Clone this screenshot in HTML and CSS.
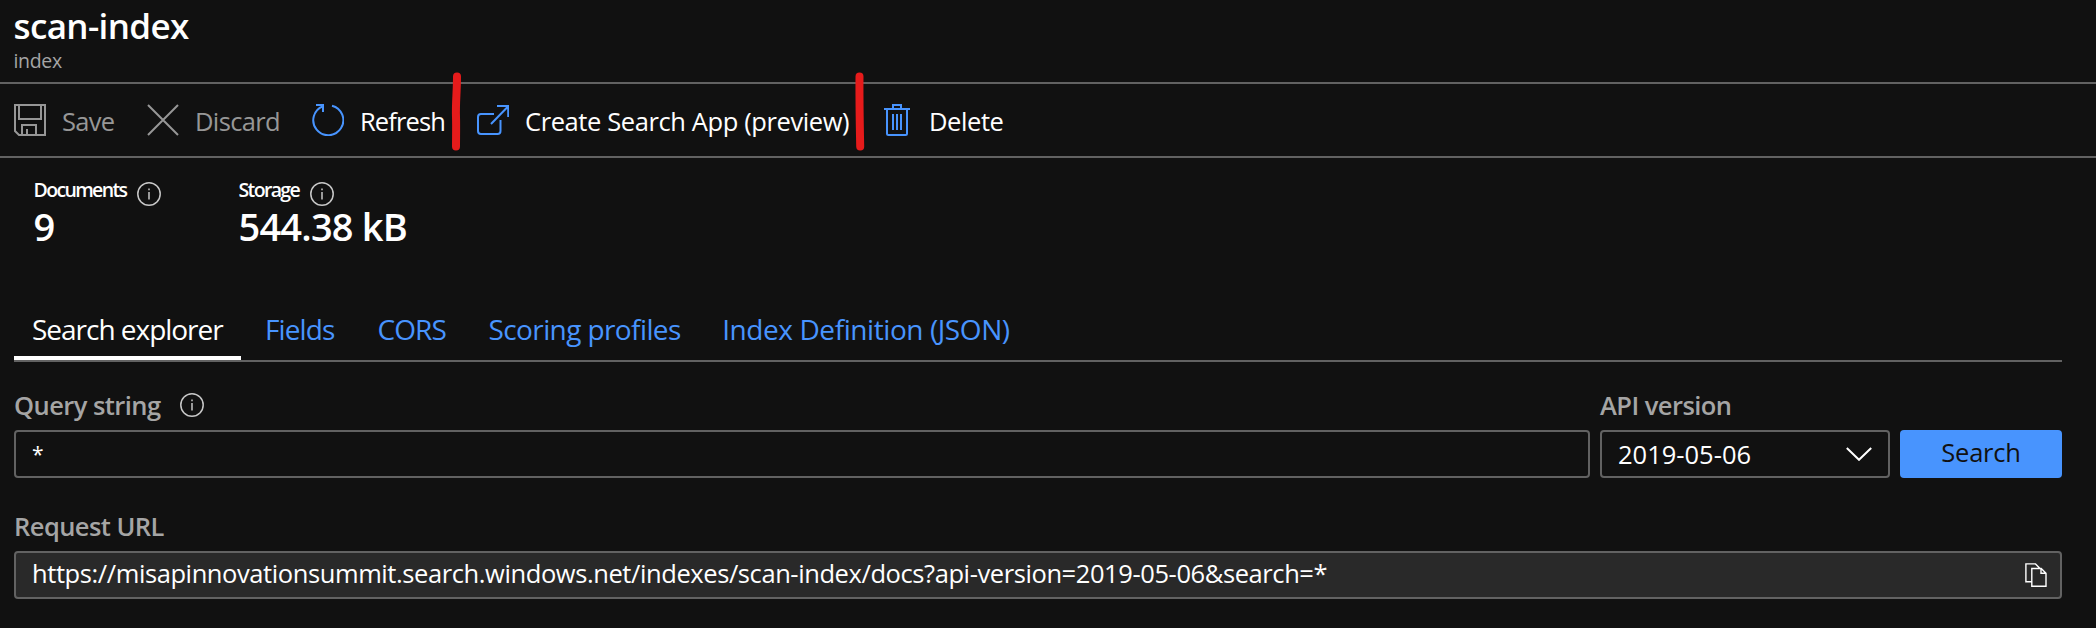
FILE: index.html
```
<!DOCTYPE html>
<html lang="en">
<head>
<meta charset="utf-8">
<title>scan-index</title>
<link rel="stylesheet" href="styles.css">
</head>
<body>
<svg class="defs" width="0" height="0">
  <symbol id="info" viewBox="0 0 24 24">
    <circle cx="12" cy="12" r="11.2" fill="none" stroke="currentColor" stroke-width="1.5"/>
    <path d="M12 10v7.5M12 6.4v1.8" stroke="currentColor" stroke-width="1.5" fill="none"/>
  </symbol>
</svg>
<header class="header">
  <h1 class="title">scan-index</h1>
  <div class="subtitle">index</div>
</header>

<nav class="toolbar">
  <div class="command disabled">
    <svg class="icon" viewBox="0 0 32 32" fill="none" stroke="currentColor" stroke-width="2">
      <path d="M1 1h30v30H5l-4-4zM5 1v14h22V1M8 31V21h14v10M13 31v-6"/>
    </svg>
    <span class="t-save">Save</span>
  </div>
  <div class="command disabled">
    <svg class="icon" viewBox="0 0 32 32" fill="none" stroke="currentColor" stroke-width="2">
      <path d="M1 1l30 30M31 1L1 31"/>
    </svg>
    <span class="t-discard">Discard</span>
  </div>
  <div class="command">
    <svg class="icon blue" viewBox="0 0 32 32" fill="none" stroke="currentColor" stroke-width="2">
      <path d="M20 1.700A15 15 0 1 1 11 2.200M4 1h7v7"/>
    </svg>
    <span class="t-refresh">Refresh</span>
  </div>
  <div class="command">
    <svg class="icon blue" viewBox="0 0 32 32" fill="none" stroke="currentColor" stroke-width="2">
      <path d="M17 10H4a3 3 0 0 0-3 3v14a3 3 0 0 0 3 3h16.500a3 3 0 0 0 3-3V16M14 20L31 2.500M20 2h11.200v11"/>
    </svg>
    <span class="t-create">Create Search App (preview)</span>
  </div>
  <div class="command">
    <svg class="icon blue" viewBox="0 0 32 32" fill="none" stroke="currentColor" stroke-width="2">
      <path d="M3 5h26M12 5V1h8v4M6 5v24.500q0 1.500 1.500 1.500h17q1.500 0 1.500-1.500V5M12 10v16M16 10v16M20 10v16"/>
    </svg>
    <span class="t-delete">Delete</span>
  </div>
  <svg class="mark mark-left" viewBox="0 0 12 80"><path d="M7 4.500C7 20 5.500 30 6 45C6.300 55 6 65 6 74.500"/></svg>
  <svg class="mark mark-right" viewBox="0 0 12 80"><path d="M5.500 4.500C5.300 30 5.700 50 6.200 74.500"/></svg>
</nav>

<section class="stats">
  <div class="stat">
    <div class="stat-label"><span class="t-documents">Documents</span><svg class="info"><use href="#info"/></svg></div>
    <div class="stat-value">9</div>
  </div>
  <div class="stat">
    <div class="stat-label"><span class="t-storage">Storage</span><svg class="info"><use href="#info"/></svg></div>
    <div class="stat-value">544.38 kB</div>
  </div>
</section>

<nav class="tabs">
  <a class="tab active">Search explorer</a>
  <a class="tab t-fields">Fields</a>
  <a class="tab t-cors">CORS</a>
  <a class="tab t-scoring">Scoring profiles</a>
  <a class="tab t-index">Index Definition (JSON)</a>
</nav>

<main class="form">
  <div class="row">
    <div class="field">
      <div class="label">Query string<svg class="info"><use href="#info"/></svg></div>
      <div class="box"><span class="star">*</span></div>
    </div>
    <div class="field">
      <div class="label t-api">API version</div>
      <div class="box select"><span class="version">2019-05-06</span>
        <svg class="chevron" viewBox="0 0 26 14"><path d="M.8 1L13 12.800L25.200 1" fill="none" stroke="currentColor" stroke-width="2"/></svg>
      </div>
    </div>
    <button class="search">Search</button>
  </div>
  <div class="field request">
    <div class="label">Request URL</div>
    <div class="box readonly"><span class="url">https://misapinnovationsummit.search.windows.net/indexes/scan-index/docs?api-version=2019-05-06&amp;search=*</span>
      <svg class="copy" viewBox="0 0 22 24" fill="none" stroke="currentColor" stroke-width="1.400">
        <path d="M6.500 18.800H.9V.9h9.600l4.500 4.500M6.800 5.500h9.400l4.800 4.800v13H6.800zM16 5.500v4.800h5"/>
      </svg>
    </div>
  </div>
</main>
</body>
</html>
```
FILE: styles.css
```
* { box-sizing: border-box; }
body {
  margin: 0;
  height: 628px;
  overflow: hidden;
  background: #111111;
  color: #ffffff;
  font: 25.5px/34px "Open Sans", "Noto Sans", sans-serif;
  white-space: nowrap;
}
.defs { display: block; height: 0; }
.header { height: 84px; padding: 5px 0 0 13.5px; border-bottom: 2px solid #626262; }
.title { margin: 0; font-size: 35px; line-height: 42px; font-weight: 650; letter-spacing: -0.62px; }
.subtitle { margin-top: 1px; font-size: 19.5px; line-height: 26px; letter-spacing: -0.32px; color: #a5a5a5; }

.toolbar {
  position: relative;
  display: grid;
  grid-template-columns: 133px 165px 165px 404px auto;
  height: 74px;
  padding: 20px 0 0 14px;
  border-bottom: 2px solid #626262;
}
.command { display: flex; align-items: flex-start; gap: 16px; }
.disabled { color: #979797; }
.icon { width: 32px; height: 32px; flex: none; }
.blue { color: #4894fe; }
.t-save { letter-spacing: -0.7px; }
.t-discard { letter-spacing: -0.65px; }
.t-refresh { letter-spacing: -0.87px; }
.t-create { letter-spacing: -0.4px; }
.t-delete { letter-spacing: -0.41px; }
.mark { position: absolute; top: -12px; width: 12px; height: 80px; fill: none; stroke: #e61b1b; stroke-width: 8px; stroke-linecap: round; }
.mark-left { left: 450px; }
.mark-right { left: 854px; }

.stats { display: grid; grid-template-columns: 205px auto; padding: 17px 0 0 33.5px; height: 152px; justify-content: start; }
.stat-label { display: flex; gap: 11px; height: 29px; font-size: 19.5px; line-height: 29px; font-weight: 650; }
.t-documents { letter-spacing: -1.65px; }
.t-storage { letter-spacing: -1.65px; }
.stat-value { font-size: 38px; line-height: 44px; font-weight: 650; letter-spacing: -0.8px; }
.info { width: 24px; height: 24px; flex: none; color: #c8c8c8; }
.stat-label .info { margin-top: 7px; }

.tabs {
  display: grid;
  grid-template-columns: 227px 112.5px 111px 233.7px auto;
  width: 2048px;
  height: 52px;
  margin-left: 14px;
  border-bottom: 2px solid #626262;
  font-size: 28px;
  line-height: 38px;
}
.tab { padding-left: 24px; color: #4894fe; }
.active { padding-left: 18px; color: #ffffff; border-bottom: 4px solid #ffffff; letter-spacing: -1.02px; }
.t-fields { letter-spacing: -0.89px; }
.t-cors { letter-spacing: -0.9px; }
.t-scoring { letter-spacing: -0.6px; }
.t-index { letter-spacing: -0.42px; }

.form { width: 2048px; margin: 26px 0 0 14px; }
.row { display: grid; grid-template-columns: 1576px 290px 162px; gap: 10px; align-items: end; }
.label { display: flex; align-items: center; height: 34px; margin-bottom: 8px; font-weight: 600; letter-spacing: -0.55px; color: #a5a5a5; }
.label .info { margin-left: 19px; }
.box { display: flex; align-items: center; justify-content: space-between; height: 48px; padding: 0 16px; border: 2px solid #626262; border-radius: 4px; }
.star { font-size: 21px; line-height: 30px; }
.version { letter-spacing: 0; }
.chevron { width: 26px; height: 14px; }
.search { height: 48px; padding: 0 0 4px; border: 0; border-radius: 4px; background: #4894fe; color: #111111; font: inherit; letter-spacing: -0.22px; }
.request { margin-top: 31px; }
.readonly { background: #292929; padding-right: 13px; }
.url { letter-spacing: -0.41px; padding-bottom: 4px; }
.copy { width: 22px; height: 24px; }
```
